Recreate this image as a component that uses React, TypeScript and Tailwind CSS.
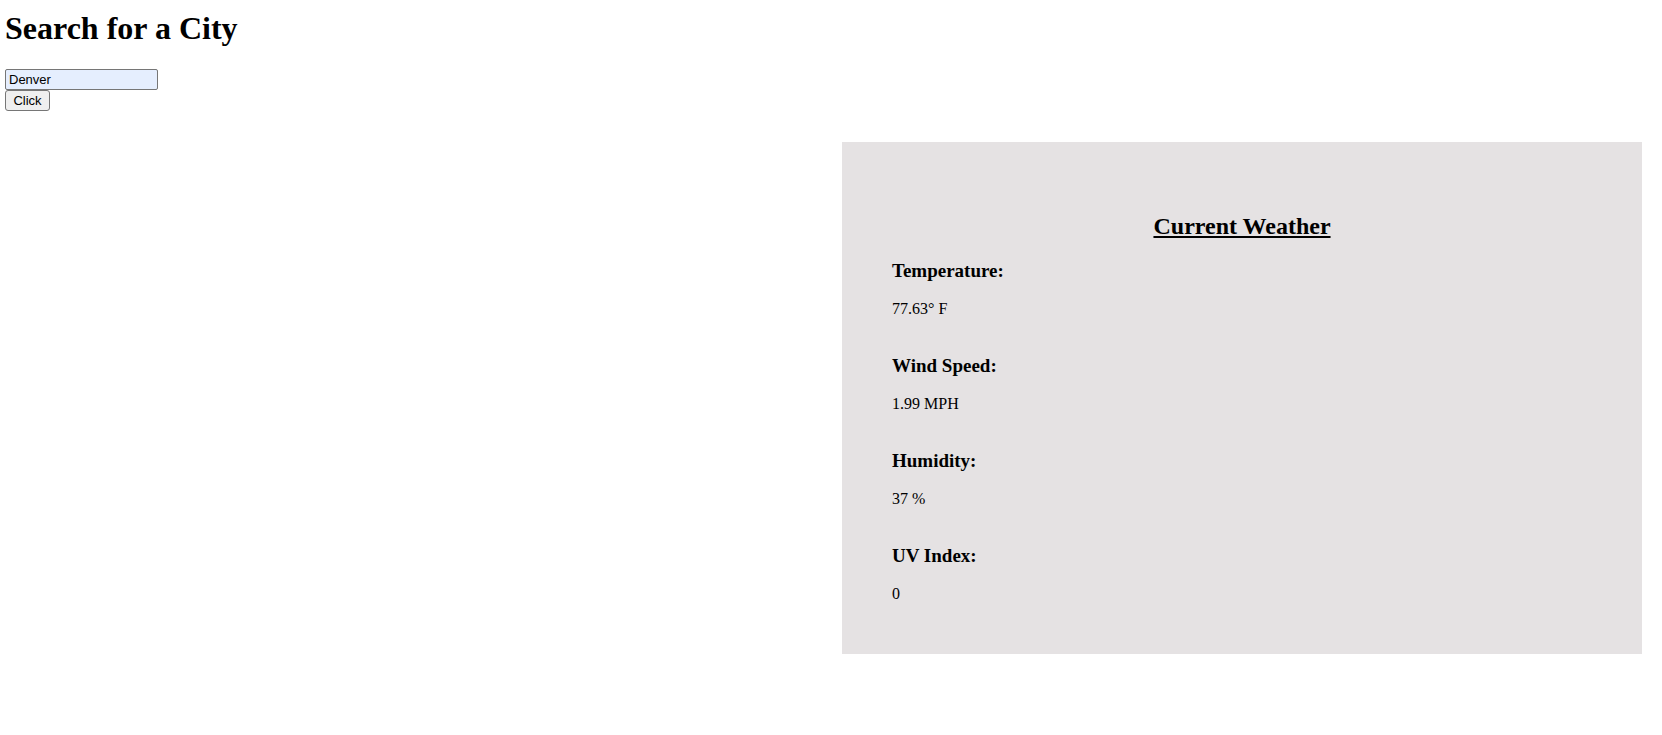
import { useState } from "react";

const readings = [
  { label: "Temperature:", value: "77.63° F" },
  { label: "Wind Speed:", value: "1.99 MPH" },
  { label: "Humidity:", value: "37 %" },
  { label: "UV Index:", value: "0" },
];

function CitySearch() {
  const [city, setCity] = useState("Denver");

  return (
    <header className="pt-2.5">
      <h1 className="text-[32px] leading-9 font-bold">Search for a City</h1>
      <form
        className="mt-[23px] flex flex-col items-start font-['Liberation_Sans',Arial,sans-serif] text-[13px] leading-[15px]"
        onSubmit={(event) => event.preventDefault()}
      >
        <input
          type="text"
          aria-label="City"
          value={city}
          onChange={(event) => setCity(event.target.value)}
          className="h-[21px] w-[153px] rounded-xs border border-[#767676] bg-[#e5eefe] px-[3px] text-black"
        />
        <button
          type="submit"
          className="h-[21px] w-[45px] rounded-[3px] border border-[#767676] bg-[#efefef] text-center text-black"
        >
          Click
        </button>
      </form>
    </header>
  );
}

function CurrentWeather() {
  return (
    <section className="w-[800px] max-w-full bg-[#e5e2e3] px-[50px] pt-[70px] pb-[51px]">
      <h2 className="text-center text-2xl leading-7 font-bold underline decoration-2 underline-offset-2">
        Current Weather
      </h2>
      <div className="mt-5 flex flex-col gap-[37px]">
        {readings.map(({ label, value }) => (
          <div key={label}>
            <h3 className="text-[19px] leading-[22px] font-bold">{label}</h3>
            <p className="mt-[18px] text-base leading-[18px]">{value}</p>
          </div>
        ))}
      </div>
    </section>
  );
}

export default function App() {
  return (
    <div className="min-h-screen bg-white pr-5 pl-[5px] font-['Liberation_Serif','Times_New_Roman',serif] text-black">
      <CitySearch />
      <main className="mt-[31px] flex justify-end">
        <CurrentWeather />
      </main>
    </div>
  );
}
